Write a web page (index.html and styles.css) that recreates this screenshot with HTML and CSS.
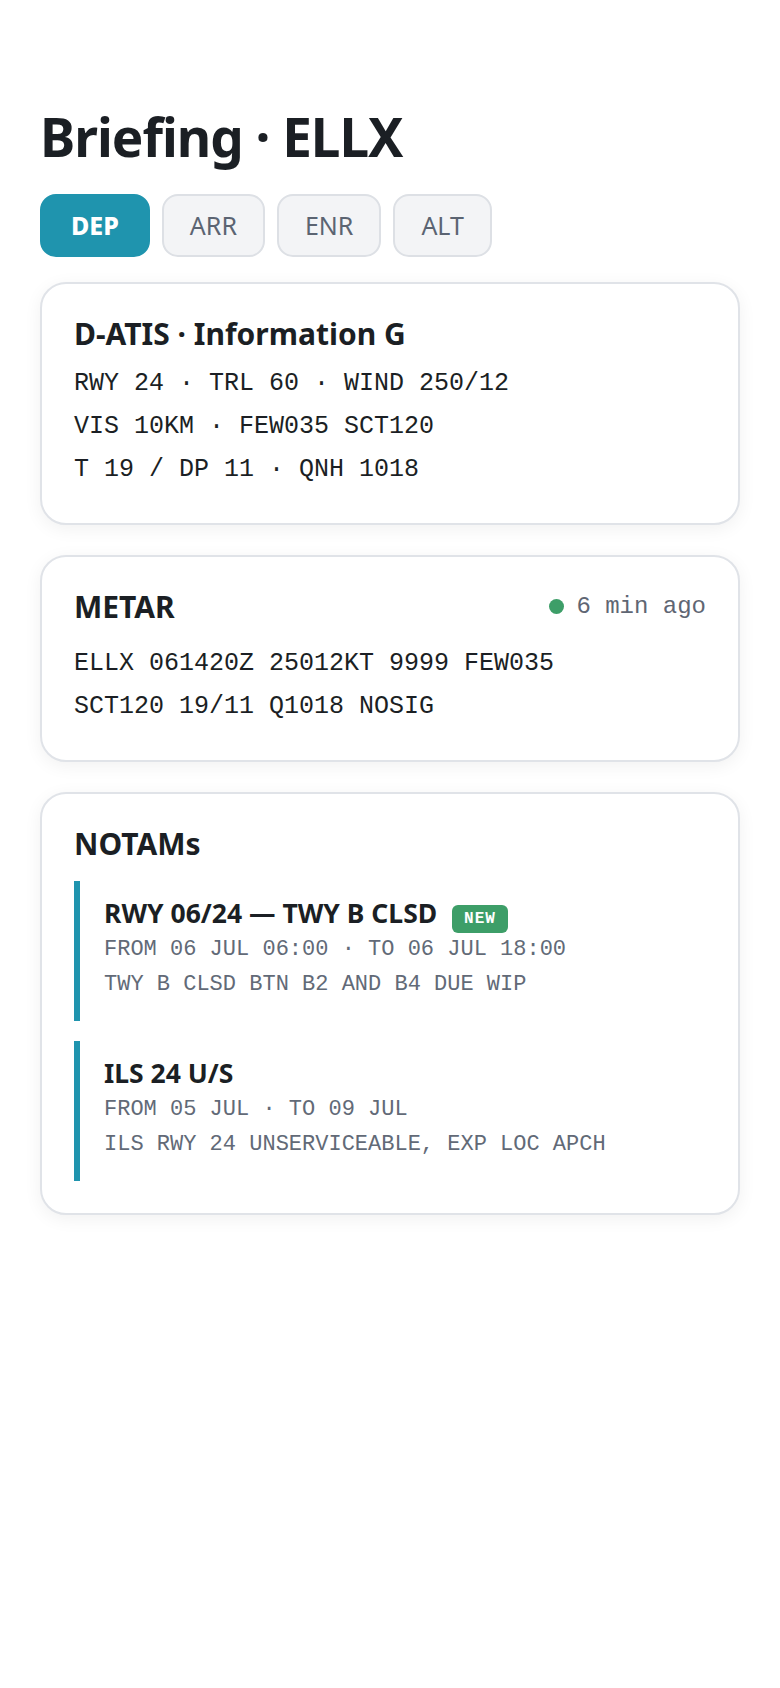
FILE: index.html
```html
<!DOCTYPE html>
<html>
<head>
    <meta charset="UTF-8">
    <title>Briefing · ELLX</title>
    <link rel="stylesheet" href="styles.css">
</head>
<body>
    <div class="wrap">
        <h1>Briefing · ELLX</h1>
        <div class="tabs">
            <button class="tab on">DEP</button>
            <button class="tab">ARR</button>
            <button class="tab">ENR</button>
            <button class="tab">ALT</button>
        </div>

        <div class="card">
            <h2>D-ATIS · Information G</h2>
            <p class="mono">RWY 24 · TRL 60 · WIND 250/12</p>
            <p class="mono">VIS 10KM · FEW035 SCT120</p>
            <p class="mono">T 19 / DP 11 · QNH 1018</p>
        </div>

        <div class="card">
            <div class="head">
                <h2>METAR</h2>
                <span class="age"><i class="dot"></i>6 min ago</span>
            </div>
            <p class="mono">ELLX 061420Z 25012KT 9999 FEW035</p>
            <p class="mono">SCT120 19/11 Q1018 NOSIG</p>
        </div>

        <div class="card">
            <h2>NOTAMs</h2>
            <div class="notams">
                <div class="notam">
                    <h3>RWY 06/24 — TWY B CLSD <span class="badge">NEW</span></h3>
                    <p class="meta">FROM 06 JUL 06:00 · TO 06 JUL 18:00</p>
                    <p class="meta">TWY B CLSD BTN B2 AND B4 DUE WIP</p>
                </div>
                <div class="notam">
                    <h3>ILS 24 U/S</h3>
                    <p class="meta">FROM 05 JUL · TO 09 JUL</p>
                    <p class="meta">ILS RWY 24 UNSERVICEABLE, EXP LOC APCH</p>
                </div>
            </div>
        </div>
    </div>
</body>
</html>
```

FILE: styles.css
```css
body {
    margin: 0;
    background: #fff;
    color: #1b1f24;
    font-family: "Noto Sans", sans-serif;
    font-variant-ligatures: no-common-ligatures;
}

.wrap {
    padding: 105px 40px 40px;
}

h1 {
    font-size: 53px;
    font-weight: 700;
    line-height: 1.2;
    letter-spacing: -1px;
    margin: 0 0 25px;
}

.tabs {
    display: flex;
    gap: 12px;
    margin-bottom: 25px;
}

.tab {
    font-family: "Noto Sans", sans-serif;
    font-size: 25px;
    line-height: 31px;
    padding: 14px 26px;
    border: 2px solid #dde0e5;
    border-radius: 16px;
    background: #f3f4f6;
    color: #5b6472;
    cursor: pointer;
}

.tab.on {
    background: #1f94ae;
    border-color: #1f94ae;
    color: #fff;
    font-weight: 800;
    padding: 14px 29px;
}

.card {
    background: #fff;
    border: 2px solid #e0e3e8;
    border-radius: 26px;
    box-shadow: 0 4px 18px rgba(0,0,0,.06);
    padding: 32px;
    margin-bottom: 30px;
}

h2 {
    font-size: 30px;
    font-weight: 700;
    line-height: 36px;
    margin: 0 0 10px;
}

.mono {
    font-family: "Liberation Mono", monospace;
    font-size: 25px;
    line-height: 43px;
    margin: 0;
}

.head {
    display: flex;
    justify-content: space-between;
    align-items: center;
    margin-bottom: 17px;
}

.head h2 {
    margin: 0;
}

.age {
    font-family: "Liberation Mono", monospace;
    font-size: 24px;
    color: #5f6673;
    display: flex;
    align-items: center;
    gap: 12px;
}

.dot {
    width: 15px;
    height: 15px;
    border-radius: 50%;
    background: #3d9e68;
}

.notams {
    margin-top: 19px;
    display: flex;
    flex-direction: column;
    gap: 20px;
}

.notam {
    border-left: 6px solid #1f94ae;
    padding: 15px 0 19px 24px;
}

h3 {
    font-size: 26.5px;
    font-weight: 700;
    line-height: 34px;
    margin: 0 0 2px;
}

.badge {
    display: inline-block;
    font-family: "Liberation Mono", monospace;
    font-size: 16px;
    font-weight: 700;
    line-height: 20px;
    letter-spacing: 1px;
    padding: 4px 12px;
    margin: 0 0 -4px 8px;
    border-radius: 6px;
    background: #3d9e68;
    color: #fff;
}

.meta {
    font-family: "Liberation Mono", monospace;
    font-size: 22px;
    line-height: 35px;
    color: #626a77;
    margin: 0;
}
```
